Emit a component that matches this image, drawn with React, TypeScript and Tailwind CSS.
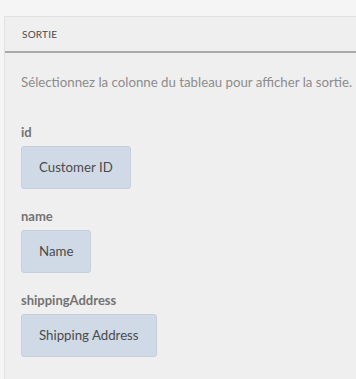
import React from "react";

const fields = [
  { key: "id", label: "Customer ID" },
  { key: "name", label: "Name" },
  { key: "shippingAddress", label: "Shipping Address" },
];

export default function App() {
  return (
    <div
      className="w-[356px] h-[379px] overflow-hidden bg-[#f5f5f5] pt-[16px] pl-[4px]"
      style={{ fontFamily: "Lato, 'Open Sans', sans-serif" }}
    >
      <div className="h-full w-[360px] bg-[#efefef] border-l border-t border-[#e2e2e2]">
        <div className="h-[36px] flex items-center pl-[17px] border-b-2 border-[#a9a9a9] bg-[#efefef]">
          <span className="text-[10px] text-[#4b4b4b] tracking-[0.2px]">SORTIE</span>
        </div>
        <div className="pl-[16px] pt-[19px]">
          <p className="text-[13.25px] leading-[20px] text-[#8c8c8c] whitespace-nowrap">
            Sélectionnez la colonne du tableau pour afficher la sortie.
          </p>
          <div className="mt-[30px] flex flex-col gap-[17px]">
            {fields.map((f) => (
              <div key={f.key} className="flex flex-col items-start">
                <div className="text-[13px] leading-[20px] font-bold text-[#737373]">{f.key}</div>
                <div className="mt-[4px] h-[43px] px-[17px] flex items-center rounded-[3px] bg-[#d0dae7] border border-[#c4cfdc] text-[13.25px] text-[#4b4b4b]">
                  {f.label}
                </div>
              </div>
            ))}
          </div>
        </div>
      </div>
    </div>
  );
}
